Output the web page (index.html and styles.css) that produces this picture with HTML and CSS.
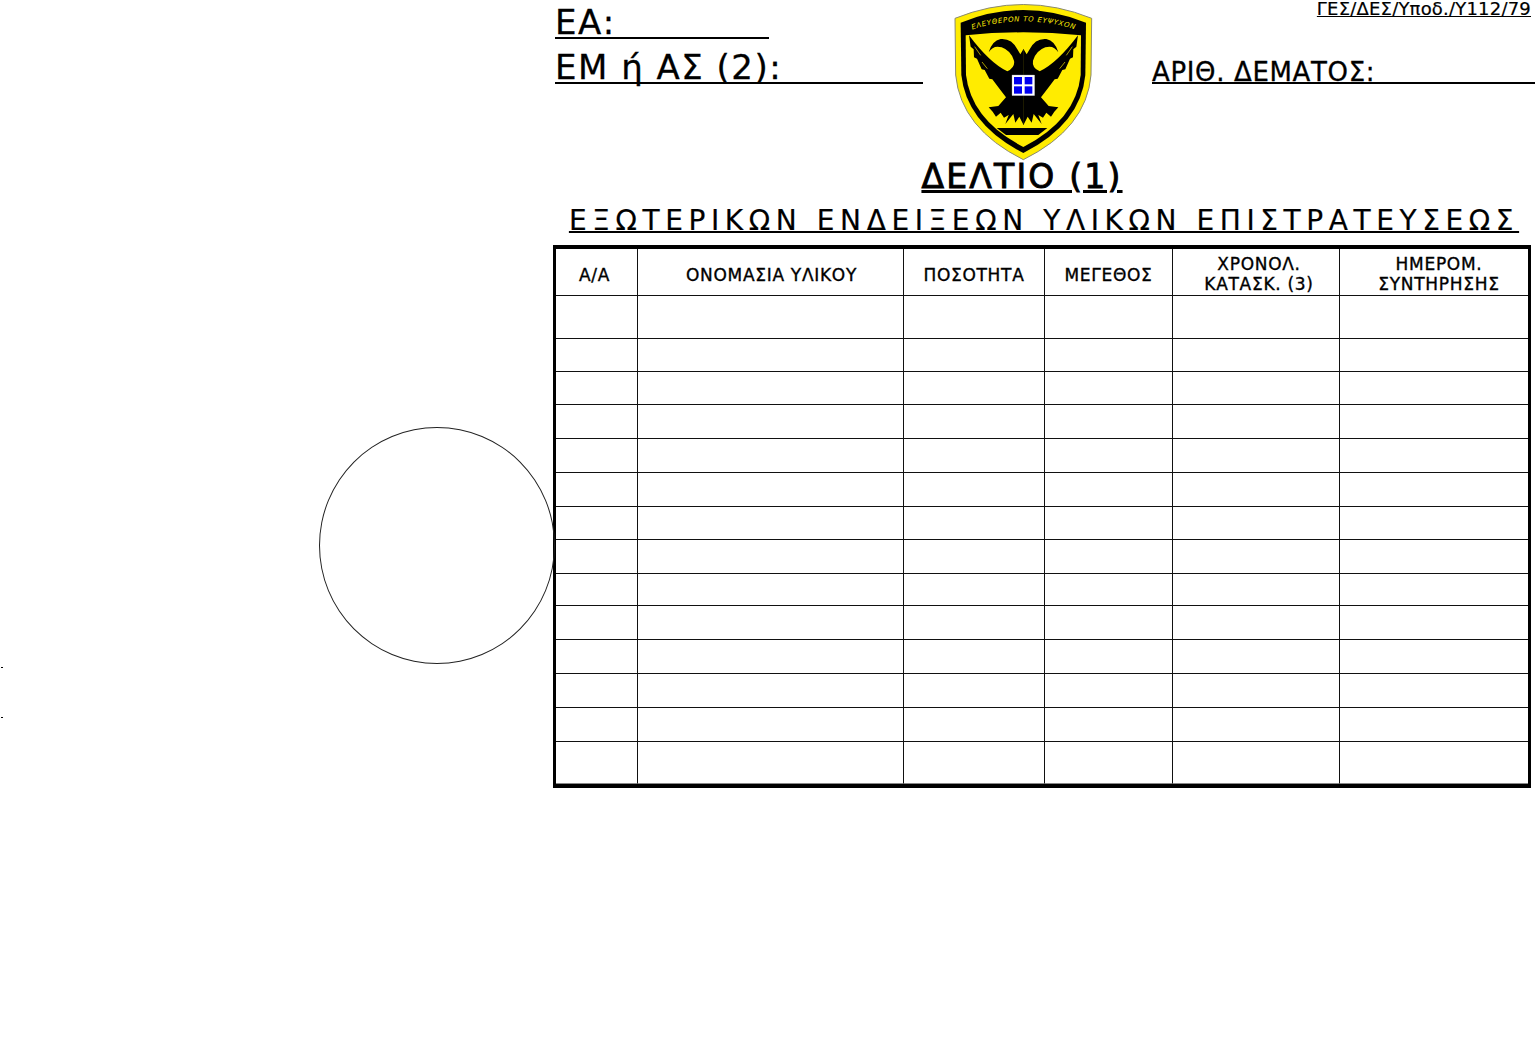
FILE: index.html
```html
<!DOCTYPE html>
<html lang="el">
<head>
    <meta charset="UTF-8">
    <meta name="viewport" content="width=device-width, initial-scale=1.0">
    <title>Δελτίο εξωτερικών ενδείξεων</title>
    <link rel="stylesheet" href="styles.css">
</head>
<body>
    <div class="tick tick-top"></div>
    <div class="tick tick-bottom"></div>
    <div class="hole"></div>

    <main class="sheet">
        <header class="sheet-head">
            <div class="head-left">
                <div class="field field-ea">ΕΑ:</div>
                <div class="field field-em">ΕΜ ή ΑΣ (2):</div>
            </div>
            <svg class="crest" viewBox="0 0 570 510" width="190" height="170">
                <path d="M75,55 Q280,-28 485,55 L483,225 Q470,385 280,479 Q92,385 77,225 Z" fill="#ffec00" stroke="#8a8a70" stroke-width="3"/>
                <path d="M92,68 Q280,-8 468,68 L466,225 Q452,372 280,459 Q110,372 94,225 Z" fill="#000"/>
                <path d="M107,106 Q280,88 453,106 L452,225 Q438,360 280,441 Q124,360 108,225 Z" fill="#ffec00"/>
                <path id="crest-motto" d="M122,90 Q280,38 440,90" fill="none"/>
                <text class="motto"><textPath href="#crest-motto" startOffset="50%" text-anchor="middle">ΕΛΕΥΘΕΡΟΝ ΤΟ ΕΥΨΥΧΟΝ</textPath></text>
                <g id="crest-half">
                    <path d="M281,146 L271,163 L262,148 Q245,114 212,117 Q186,122 176,157 Q190,134 215,142 Q243,152 252,182 Q256,203 232,214 Q180,190 117,106 L122,140 L131,148 L132,172 L141,176 L155,208 L164,210 L178,236 L187,238 L205,262 L228,292 L205,318 L176,322 L188,335 L198,350 L212,338 L222,353 L236,345 L226,372 L250,342 L256,368 L268,350 L281,376 Z"/>
                    <path class="crest-slit" d="M134,140 L152,166 M156,186 L172,206"/>
                </g>
                <use href="#crest-half" transform="translate(561,0) scale(-1,1)"/>
                <rect x="246" y="225" width="68" height="62" fill="#fff" stroke="#9a9ab0" stroke-width="1"/>
                <rect x="252" y="231" width="24" height="22" fill="#0000f0"/>
                <rect x="284" y="231" width="23" height="22" fill="#0000f0"/>
                <rect x="252" y="259" width="24" height="22" fill="#0000f0"/>
                <rect x="284" y="259" width="23" height="22" fill="#0000f0"/>
                <path d="M200,384 L352,384 L325,405 L228,405 Z"/>
            </svg>
            <div class="head-right">
                <div class="form-code">ΓΕΣ/ΔΕΣ/Υποδ./Υ112/79</div>
                <div class="field field-bundle">ΑΡΙΘ. ΔΕΜΑΤΟΣ:</div>
            </div>
        </header>

        <h1 class="title">ΔΕΛΤΙΟ (1)</h1>
        <h2 class="subtitle">ΕΞΩΤΕΡΙΚΩΝ ΕΝΔΕΙΞΕΩΝ ΥΛΙΚΩΝ ΕΠΙΣΤΡΑΤΕΥΣΕΩΣ</h2>

        <table class="items">
            <colgroup>
                <col class="col-aa">
                <col class="col-name">
                <col class="col-qty">
                <col class="col-size">
                <col class="col-year">
                <col class="col-date">
            </colgroup>
            <thead>
                <tr class="row-head">
                    <th class="nudge-left">Α/Α</th>
                    <th class="nudge-name">ΟΝΟΜΑΣΙΑ ΥΛΙΚΟΥ</th>
                    <th>ΠΟΣΟΤΗΤΑ</th>
                    <th>ΜΕΓΕΘΟΣ</th>
                    <th class="two-line nudge-right">ΧΡΟΝΟΛ.<br>ΚΑΤΑΣΚ. (3)</th>
                    <th class="two-line nudge-right">ΗΜΕΡΟΜ.<br>ΣΥΝΤΗΡΗΣΗΣ</th>
                </tr>
            </thead>
            <tbody id="rows"></tbody>
        </table>
    </main>

    <script>
        // row heights of the form, px, border included
        let rowHeights = [43, 33, 33, 34, 34, 34, 33, 34, 32, 34, 34, 34, 34, 42];
        let tbody = document.getElementById("rows");

        rowHeights.forEach(function (h) {
            let tr = document.createElement("tr");
            tr.className = "row-" + h;
            for (let i = 0; i < 6; i++) {
                tr.appendChild(document.createElement("td"));
            }
            tbody.appendChild(tr);
        });
    </script>
</body>
</html>
```

FILE: styles.css
```css
html, body {
    margin: 0;
    background-color: #ffffff;
    color: #000000;
    font-family: "DejaVu Sans", Verdana, sans-serif;
}
body {
    position: relative;
    height: 1063px;
    overflow: hidden;
}
.sheet {
    margin-left: 553px;
    width: 982px;
}

/* head of the form */
.sheet-head {
    display: flex;
    height: 160px;
}
.head-left {
    width: 370px;
    padding-left: 2px;
    box-sizing: border-box;
}
.crest {
    flex: none;
    margin-left: 7px;
}
.crest-slit {
    fill: none;
    stroke: #ffec00;
    stroke-width: 2;
}
.head-right {
    flex: 1;
    margin-left: 32px;
}
.field {
    border-bottom: 2px solid #000;
    box-sizing: border-box;
    white-space: nowrap;
    -webkit-text-stroke: 0.3px #000;
}
.field-ea {
    width: 214px;
    height: 39px;
    font-size: 34px;
    line-height: 45px;
    letter-spacing: 1.5px;
}
.field-em {
    height: 45px;
    font-size: 34px;
    line-height: 57px;
    letter-spacing: 1.5px;
}
.form-code {
    text-align: right;
    padding-right: 4px;
    font-size: 18px;
    line-height: 18px;
    letter-spacing: 0.2px;
    text-decoration: underline;
    height: 54px;
    -webkit-text-stroke: 0.2px #000;
}
.field-bundle {
    font-size: 26px;
    line-height: 36px;
    letter-spacing: 0.65px;
    height: 30px;
}

/* titles */
.title {
    margin: 0;
    text-align: center;
    font-size: 33px;
    font-weight: normal;
    line-height: 34px;
    height: 34px;
    padding-right: 44px;
    letter-spacing: 2.2px;
    text-decoration: underline;
    -webkit-text-stroke: 0.9px #000;
}
.subtitle {
    margin: 0;
    padding-top: 10px;
    text-align: center;
    font-size: 28px;
    font-weight: normal;
    line-height: 34px;
    height: 41px;
    letter-spacing: 5.6px;
    text-decoration: underline;
    text-decoration-thickness: 2px;
    white-space: nowrap;
    -webkit-text-stroke: 0.2px #000;
}

/* table */
.items {
    table-layout: fixed;
    border-collapse: separate;
    border-spacing: 0;
    width: 978px;
    border-style: solid;
    border-color: #000;
    border-width: 4px 3px;
}
.col-aa { width: 82px; }
.col-name { width: 266px; }
.col-qty { width: 141px; }
.col-size { width: 128px; }
.col-year { width: 167px; }
.col-date { width: 188px; }

.items th,
.items td {
    box-sizing: border-box;
    padding: 0;
    border-right: 1px solid #111;
    border-bottom: 1px solid #111;
}
.items th:last-child,
.items td:last-child {
    border-right: none;
}
.items th {
    padding-top: 6px;
    font-size: 17px;
    font-weight: normal;
    line-height: 20px;
    letter-spacing: 0.7px;
    text-align: center;
    -webkit-text-stroke: 0.35px #000;
}
.items .two-line { padding-top: 4px; }
.items .nudge-left { padding-right: 4px; }
.items .nudge-name { padding-left: 2px; }
.items .nudge-right { padding-left: 6px; }
.items .nudge-right:last-child { padding-left: 10px; }

.row-head th { height: 47px; }
.row-32 td { height: 32px; }
.row-33 td { height: 33px; }
.row-34 td { height: 34px; }
.row-43 td { height: 43px; }
.row-42 td {
    height: 42px;
    border-bottom-color: #888;
}

/* marks off the table */
.hole {
    position: absolute;
    left: 319px;
    top: 427px;
    width: 236px;
    height: 237px;
    box-sizing: border-box;
    border: 1px solid #222;
    border-radius: 50%;
}
.tick {
    position: absolute;
    left: 1px;
    width: 2px;
    height: 1px;
    background-color: #000;
}
.tick-top { top: 667px; }
.tick-bottom { top: 717px; }

.motto {
    font-family: "DejaVu Sans", sans-serif;
    font-size: 21px;
    font-style: italic;
    letter-spacing: 2px;
    fill: #ffec00;
}
```
